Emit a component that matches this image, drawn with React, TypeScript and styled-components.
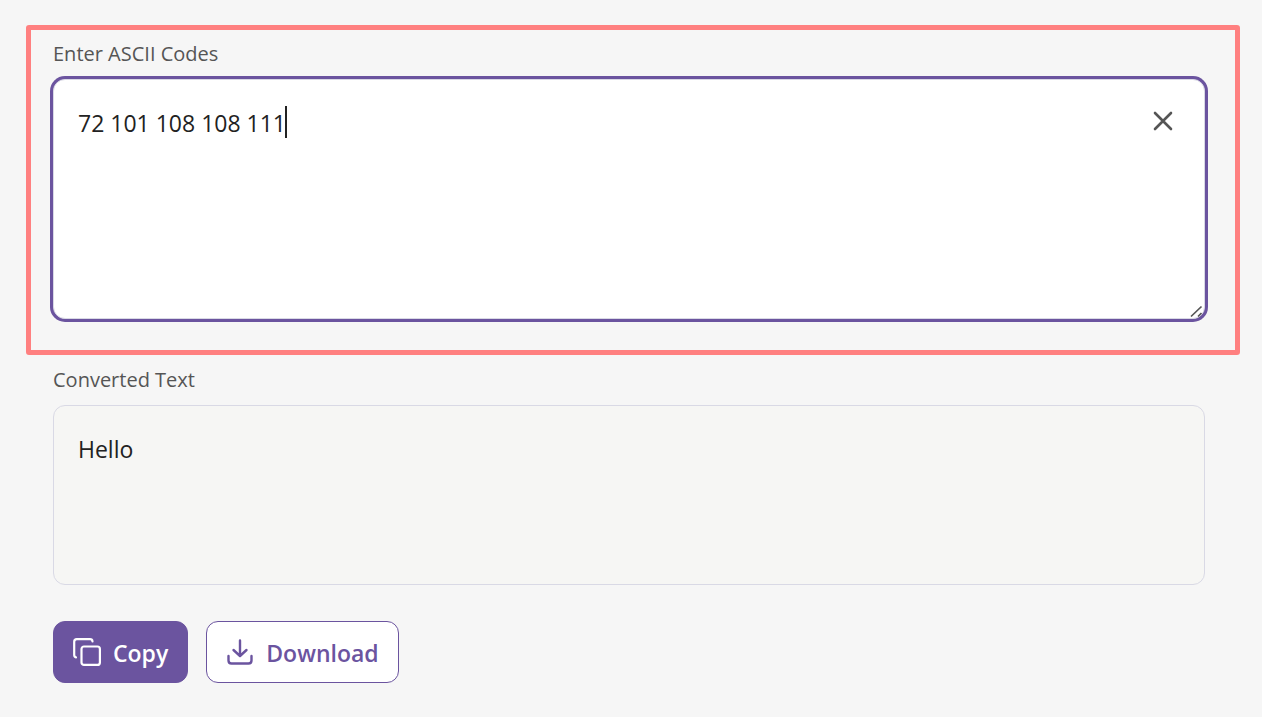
import React, { useState } from 'react';
import styled, { createGlobalStyle, css } from 'styled-components';

const GlobalStyle = createGlobalStyle`
  *, *::before, *::after { box-sizing: border-box; }
  body {
    margin: 0;
    background: #f6f6f6;
    color: #222222;
    font-family: "Segoe UI", "Open Sans", "Noto Sans", sans-serif;
  }
`;

const Page = styled.main`
  padding: 25px 22px 34px 26px;
`;

const Field = styled.section<{ $highlighted?: boolean }>`
  display: flex;
  flex-direction: column;
  gap: 11px;
  border: 5px solid ${(p) => (p.$highlighted ? '#ff8080' : 'transparent')};
  border-radius: 3px;
  padding: ${(p) => (p.$highlighted ? '10px 30px 31px 22px' : '6px 30px 31px 22px')};
`;

const Label = styled.label`
  font-size: 20px;
  line-height: 28px;
  color: #555555;
`;

const InputWrap = styled.div`
  position: relative;
  display: flex;
`;

const TextBox = styled.textarea<{ $active?: boolean }>`
  display: block;
  width: 100%;
  height: 180px;
  margin: 0;
  padding: 26px 72px 24px 24px;
  border: 1px solid #d9d9e5;
  border-radius: 12px;
  outline: none;
  resize: none;
  background: #f6f6f4;
  color: #222222;
  font-family: inherit;
  font-size: 23px;
  line-height: 34px;
  ${(p) =>
    p.$active &&
    css`
      height: 240px;
      background: #ffffff;
      box-shadow: 0 0 0 3px #6b549f;
      resize: vertical;
      caret-color: transparent;
      &::-webkit-resizer { display: none; }
    `}
`;

const Caret = styled.span`
  position: absolute;
  left: 232px;
  top: 27px;
  width: 2px;
  height: 32px;
  background: #222222;
  pointer-events: none;
`;

const ClearButton = styled.button`
  position: absolute;
  top: 24px;
  right: 24px;
  display: grid;
  place-items: center;
  width: 36px;
  height: 36px;
  padding: 0;
  border: 0;
  background: transparent;
  color: #555555;
  cursor: pointer;
`;

const Grip = styled.svg`
  position: absolute;
  right: 1px;
  bottom: 1px;
  pointer-events: none;
`;

const Actions = styled.div`
  display: flex;
  flex-wrap: wrap;
  gap: 18px;
  padding-left: 27px;
`;

const ActionButton = styled.button<{ $primary?: boolean }>`
  display: flex;
  align-items: center;
  gap: 12px;
  height: 62px;
  padding: 0 19px;
  border: 1px solid #6b549f;
  border-radius: 12px;
  background: ${(p) => (p.$primary ? '#6b549f' : '#ffffff')};
  color: ${(p) => (p.$primary ? '#ffffff' : '#6b549f')};
  font-family: inherit;
  font-size: 23px;
  font-weight: 600;
  line-height: 34px;
  cursor: pointer;
`;

const ButtonText = styled.span`
  padding-top: 2px;
`;

const CopyIcon = () => (
  <svg width="28" height="28" viewBox="0 0 28 28" fill="none" stroke="currentColor" strokeWidth="2.200" strokeLinecap="round" strokeLinejoin="round" aria-hidden="true">
    <rect x="8.500" y="8.500" width="18.400" height="18.400" rx="2.500" />
    <path d="M3 19.300Q1.200 19 1.200 17V3.800Q1.200 1.200 3.800 1.200H17Q19.300 1.200 19.500 3.500" />
  </svg>
);

const DownloadIcon = () => (
  <svg width="28" height="28" viewBox="0 0 28 28" fill="none" stroke="currentColor" strokeWidth="2.400" strokeLinecap="round" strokeLinejoin="round" aria-hidden="true">
    <path d="M14 2.500V17.500M7.500 12L14 18L20.500 12M2.500 18V22.500Q2.500 25.500 5.500 25.500H22.500Q25.500 25.500 25.500 22.500V18" />
  </svg>
);

const toText = (codes: string) =>
  codes.trim().split(/\s+/).filter(Boolean).map((c) => String.fromCharCode(Number(c))).join('');

const initialCodes = '72 101 108 108 111';

export default function App() {
  const [codes, setCodes] = useState(initialCodes);
  const text = toText(codes);

  const download = () => {
    const link = document.createElement('a');
    link.href = URL.createObjectURL(new Blob([text], { type: 'text/plain' }));
    link.download = 'converted.txt';
    link.click();
  };

  return (
    <>
      <GlobalStyle />
      <Page>
        <Field $highlighted>
          <Label htmlFor="codes">Enter ASCII Codes</Label>
          <InputWrap>
            <TextBox id="codes" $active value={codes} spellCheck={false} onChange={(e) => setCodes(e.target.value)} />
            {codes === initialCodes && <Caret />}
            <ClearButton type="button" aria-label="Clear" onClick={() => setCodes('')}>
              <svg width="20" height="20" viewBox="0 0 20 20" stroke="currentColor" strokeWidth="2.600" strokeLinecap="round" aria-hidden="true">
                <path d="M2 2L18 18M18 2L2 18" />
              </svg>
            </ClearButton>
            <Grip width="14" height="14" viewBox="0 0 14 14" stroke="#555555" strokeWidth="1.700" aria-hidden="true">
              <path d="M1 12.500L11.500 2.500M8 12.500L11.500 9" />
            </Grip>
          </InputWrap>
        </Field>
        <Field>
          <Label htmlFor="result">Converted Text</Label>
          <TextBox id="result" readOnly value={text} />
        </Field>
        <Actions>
          <ActionButton type="button" $primary onClick={() => navigator.clipboard?.writeText(text)}>
            <CopyIcon />
            <ButtonText>Copy</ButtonText>
          </ActionButton>
          <ActionButton type="button" onClick={download}>
            <DownloadIcon />
            <ButtonText>Download</ButtonText>
          </ActionButton>
        </Actions>
      </Page>
    </>
  );
}
